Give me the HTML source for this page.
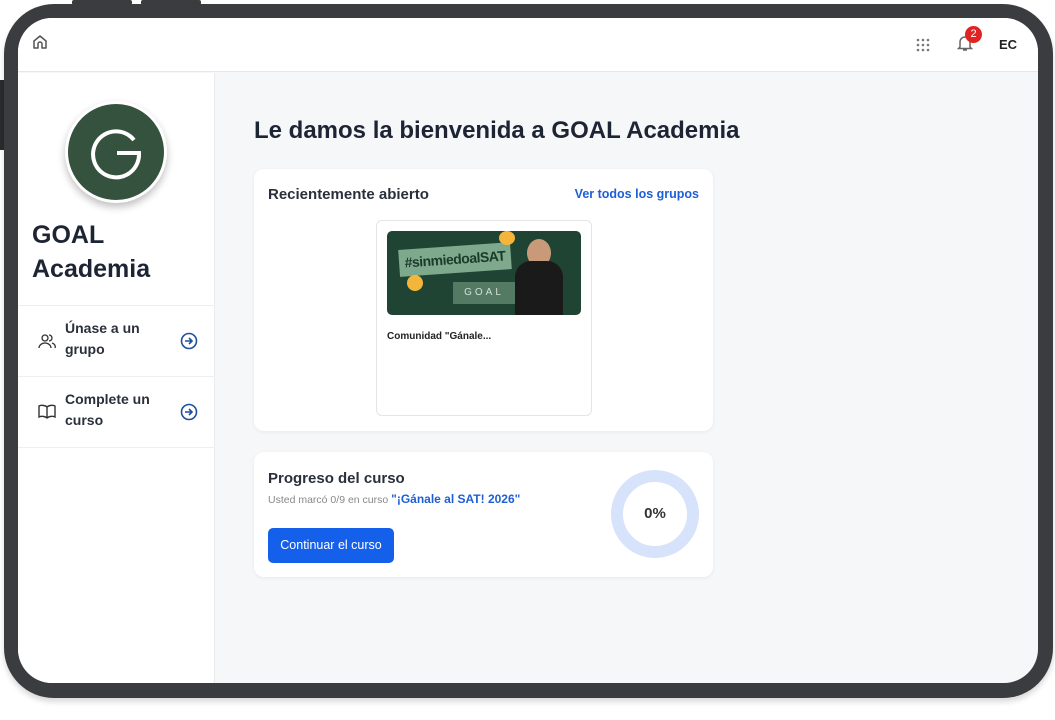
<!DOCTYPE html>
<html><head><meta charset="utf-8"><style>
*{box-sizing:border-box;margin:0;padding:0}
body{width:1055px;height:720px;background:#fff;font-family:"Liberation Sans",Arial,sans-serif;position:relative;overflow:hidden}
.frame{position:absolute;left:4px;top:4px;width:1049px;height:694px;background:#3b3c3f;border-radius:50px;box-shadow:0 4px 6px rgba(0,0,0,.15)}
.btn1{position:absolute;left:72px;top:0;width:60px;height:5px;background:#3b3c3f;border-radius:2px}
.btn2{position:absolute;left:141px;top:0;width:60px;height:5px;background:#3b3c3f;border-radius:2px}
.side{position:absolute;left:0;top:80px;width:5px;height:70px;background:#2a2b2d}
.screen{position:absolute;left:18px;top:18px;width:1020px;height:665px;background:#f6f7f9;border-radius:34px;overflow:hidden}
.hdr{position:absolute;left:0;top:0;width:100%;height:54px;background:#fff;border-bottom:1px solid #e6e7ea}
.sb{position:absolute;left:0;top:55px;width:197px;height:620px;background:#fff;border-right:1px solid #e9eaed}
.logo{position:absolute;left:47px;top:28px;width:102px;height:102px;border-radius:50%;background:#35523f;border:3px solid #fff;box-shadow:0 4px 8px rgba(0,0,0,.25)}
.sbt{position:absolute;left:14px;top:145px;font-size:25px;line-height:34px;color:#1d2433;font-weight:bold}
.item{position:absolute;left:0;width:197px;height:71px;border-top:1px solid #eceef0}
.item .t{position:absolute;left:47px;top:12px;font-size:14px;line-height:21px;font-weight:bold;color:#2a303b}
.item svg.ic{position:absolute;left:20px;top:27px}
.item svg.ar{position:absolute;left:162px;top:26px}
h1{position:absolute;left:236px;top:99px;font-size:24px;font-weight:bold;color:#1d2433}
.card{position:absolute;background:#fff;border-radius:10px;box-shadow:0 1px 4px rgba(0,0,0,.06)}
.ct{font-size:15px;font-weight:bold;color:#2a303b;position:absolute}
.link{color:#1f5fd6;font-weight:bold}
</style></head><body>
<div class="btn1"></div><div class="btn2"></div><div class="side"></div>
<div class="frame"></div>
<div class="screen">
 <div class="hdr">
  <svg style="position:absolute;left:14px;top:16px" width="16" height="16" viewBox="0 0 16 16" fill="none" stroke="#555" stroke-width="1.5" stroke-linejoin="round"><path d="M2 7L8 2l6 5v7h-4v-4a2 2 0 0 0-4 0v4H2z"/></svg>
  <svg style="position:absolute;left:898px;top:20px" width="14" height="14" viewBox="0 0 14 14" fill="#777"><circle cx="2" cy="2" r="1.3"/><circle cx="7" cy="2" r="1.3"/><circle cx="12" cy="2" r="1.3"/><circle cx="2" cy="7" r="1.3"/><circle cx="7" cy="7" r="1.3"/><circle cx="12" cy="7" r="1.3"/><circle cx="2" cy="12" r="1.3"/><circle cx="7" cy="12" r="1.3"/><circle cx="12" cy="12" r="1.3"/></svg>
  <svg style="position:absolute;left:939px;top:16px" width="16" height="18" viewBox="0 0 16 18" fill="none" stroke="#666" stroke-width="1.5"><path d="M3 13V8a5 5 0 0 1 10 0v5l1.5 1.5h-13z M6 16h4"/></svg>
  <div style="position:absolute;left:947px;top:8px;width:17px;height:17px;border-radius:50%;background:#e02424;color:#fff;font-size:11px;text-align:center;line-height:17px">2</div>
  <div style="position:absolute;left:981px;top:19px;font-size:13px;font-weight:bold;color:#222">EC</div>
 </div>
 <div class="sb">
  <div class="logo"><svg width="96" height="96" viewBox="0 0 96 96" fill="none" stroke="#fff" stroke-width="4"><path d="M66 36A23 23 0 1 0 71 49H49"/></svg></div>
  <div class="sbt">GOAL<br>Academia</div>
  <div class="item" style="top:232px"><svg class="ic" width="18" height="16" viewBox="0 0 18 16" fill="none" stroke="#333" stroke-width="1.3"><circle cx="7" cy="5" r="3"/><path d="M1 15a6 5 0 0 1 12 0M11 2a3 3 0 0 1 0 6M14 10a5 4 0 0 1 3 5"/></svg><div class="t">Únase a un<br>grupo</div><svg class="ar" width="18" height="18" viewBox="0 0 18 18" fill="none" stroke="#1f4f9c" stroke-width="1.6"><circle cx="9" cy="9" r="7.5"/><path d="M5 9h7M9 6l3 3-3 3"/></svg></div>
  <div class="item" style="top:303px"><svg class="ic" width="18" height="16" viewBox="0 0 18 16" fill="none" stroke="#333" stroke-width="1.4"><path d="M9 3C7 1 3 1 1 2v11c2-1 6-1 8 1 2-2 6-2 8-1V2c-2-1-6-1-8 1zM9 3v11"/></svg><div class="t">Complete un<br>curso</div><svg class="ar" width="18" height="18" viewBox="0 0 18 18" fill="none" stroke="#1f4f9c" stroke-width="1.6"><circle cx="9" cy="9" r="7.5"/><path d="M5 9h7M9 6l3 3-3 3"/></svg></div>
  <div class="item" style="top:374px;height:1px"></div>
 </div>
 <h1>Le damos la bienvenida a GOAL Academia</h1>
 <div class="card" style="left:236px;top:151px;width:459px;height:262px">
  <div class="ct" style="left:14px;top:17px">Recientemente abierto</div>
  <div class="link" style="position:absolute;right:14px;top:18px;font-size:12.5px">Ver todos los grupos</div>
  <div style="position:absolute;left:122px;top:51px;width:216px;height:196px;border:1px solid #e3e5e8;border-radius:6px">
   <div style="position:absolute;left:10px;top:10px;width:194px;height:84px;background:#1f4433;border-radius:5px;overflow:hidden">
    <div style="position:absolute;left:12px;top:15px;width:112px;height:27px;background:#7fa98c;transform:rotate(-4deg);color:#1a3a2a;font-weight:bold;font-size:14px;line-height:27px;text-align:center;letter-spacing:-0.5px">#sinmiedoalSAT</div>
    <div style="position:absolute;left:66px;top:51px;width:62px;height:22px;background:#557a63;color:#cfe0d4;font-size:10px;text-align:center;line-height:22px;letter-spacing:3px">GOAL</div>
    <div style="position:absolute;left:140px;top:8px;width:24px;height:28px;border-radius:50%;background:#c89a7a"></div>
    <div style="position:absolute;left:128px;top:30px;width:48px;height:60px;border-radius:16px 16px 0 0;background:#1a1a1a"></div>
    <div style="position:absolute;left:20px;top:44px;width:16px;height:16px;border-radius:50%;background:#f4b63a"></div>
    <div style="position:absolute;left:112px;top:0px;width:16px;height:14px;border-radius:50%;background:#f4b63a"></div>
   </div>
   <div style="position:absolute;left:10px;top:110px;font-size:10px;font-weight:bold;color:#222">Comunidad "Gánale...</div>
  </div>
 </div>
 <div class="card" style="left:236px;top:434px;width:459px;height:125px">
  <div class="ct" style="left:14px;top:18px">Progreso del curso</div>
  <div style="position:absolute;left:14px;top:40px;font-size:10.5px;color:#888">Usted marcó 0/9 en curso <span class="link" style="font-size:12px">"¡Gánale al SAT! 2026"</span></div>
  <div style="position:absolute;left:14px;top:76px;width:126px;height:35px;background:#1560ea;border-radius:5px;color:#fff;font-size:12.5px;text-align:center;line-height:35px">Continuar el curso</div>
  <div style="position:absolute;left:357px;top:18px;width:88px;height:88px;border-radius:50%;border:12px solid #d6e3fb;text-align:center;line-height:64px;font-size:15px;font-weight:bold;color:#333">0%</div>
 </div>
</div>
</body></html>
